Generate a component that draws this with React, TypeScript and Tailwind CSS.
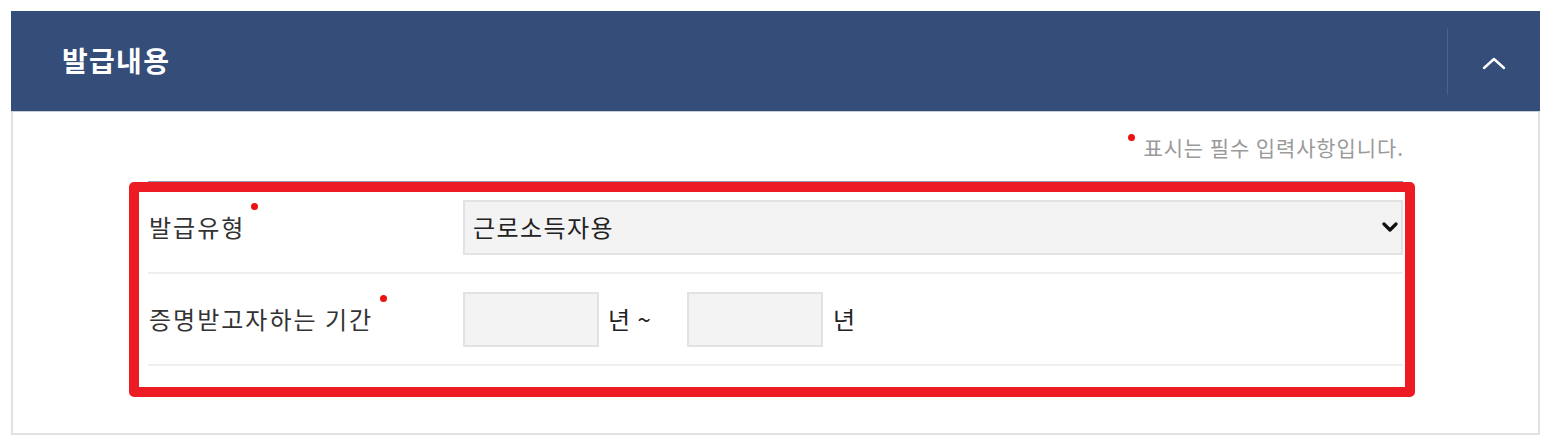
import React from "react";

const font = { fontFamily: '"Noto Sans CJK KR", "Noto Sans", sans-serif' };

function Dot({ className = "" }: { className?: string }) {
  return <span className={`inline-block w-[7px] h-[7px] rounded-full bg-[#ee1111] ${className}`} />;
}

export default function App() {
  return (
    <div className="bg-white w-[1560px] h-[448px] pt-[11px] pl-[11px]" style={font}>
      <div className="relative w-[1529px]">
        <div className="h-[101px] bg-[#344d79] border-b border-[#c9cfd9] flex items-center">
          <div className="flex-1 pl-[51px] text-white text-[28px] font-bold tracking-[1.3px] leading-none pb-[2px]">
            발급내용
          </div>
          <div className="h-[67px] w-px bg-[#4b6291]" />
          <div className="w-[92px] flex items-center justify-center pt-[3px]">
            <svg width="24" height="14" viewBox="0 0 24 14" fill="none">
              <path d="M2 12 L12 3 L22 12" stroke="white" strokeWidth="2.4" strokeLinecap="round" strokeLinejoin="round" />
            </svg>
          </div>
        </div>
        <div className="border-x-2 border-b-2 border-[#e2e2e2] h-[323px]">
          <div className="flex justify-end pr-[134px] pt-[20px] h-[69px]">
            <div className="flex items-start text-[21px] leading-[30px] text-[#9a9a9a] tracking-[0.9px]">
              <Dot className="mt-[2px] mr-[8px]" />
              <span>표시는 필수 입력사항입니다.</span>
            </div>
          </div>
          <div className="mx-[135px] border-t border-[#8e9ab0]">
            <div className="flex items-center h-[92px] border-b-2 border-[#efefef]">
              <div className="w-[315px] text-[24px] tracking-[2px] text-[#333] leading-none pl-[1px]">
                발급유형
                <Dot className="relative -top-[27px] left-[6px]" />
              </div>
              <div className="relative flex-1">
                <select className="appearance-none w-full h-[55px] bg-[#f3f3f3] border-2 border-[#e2e2e2] pl-[8px] text-[24px] tracking-[1.4px] text-[#222] outline-none" style={font} defaultValue="a">
                  <option value="a">근로소득자용</option>
                </select>
                <svg className="absolute right-[5px] top-[21px] pointer-events-none" width="16" height="12" viewBox="0 0 16 12" fill="none">
                  <path d="M2 3 L8 9 L14 3" stroke="#111" strokeWidth="3.2" strokeLinecap="round" strokeLinejoin="round" />
                </svg>
              </div>
            </div>
            <div className="flex items-center h-[92px] border-b-2 border-[#efefef]">
              <div className="w-[315px] text-[24px] tracking-[2px] text-[#333] leading-none pl-[1px]">
                증명받고자하는 기간
                <Dot className="relative -top-[27px] left-[7px]" />
              </div>
              <div className="flex items-center text-[24px] text-[#222]">
                <input className="w-[136px] h-[55px] bg-[#f3f3f3] border-2 border-[#e2e2e2] outline-none" />
                <span className="ml-[9px] w-[79px] tracking-[1px]">년 ~</span>
                <input className="w-[136px] h-[55px] bg-[#f3f3f3] border-2 border-[#e2e2e2] outline-none" />
                <span className="ml-[10px]">년</span>
              </div>
            </div>
          </div>
        </div>
        <div className="absolute left-[118px] top-[171px] w-[1286px] h-[215px] border-[10px] border-[#ed1c24] rounded-[5px] pointer-events-none" />
      </div>
    </div>
  );
}
